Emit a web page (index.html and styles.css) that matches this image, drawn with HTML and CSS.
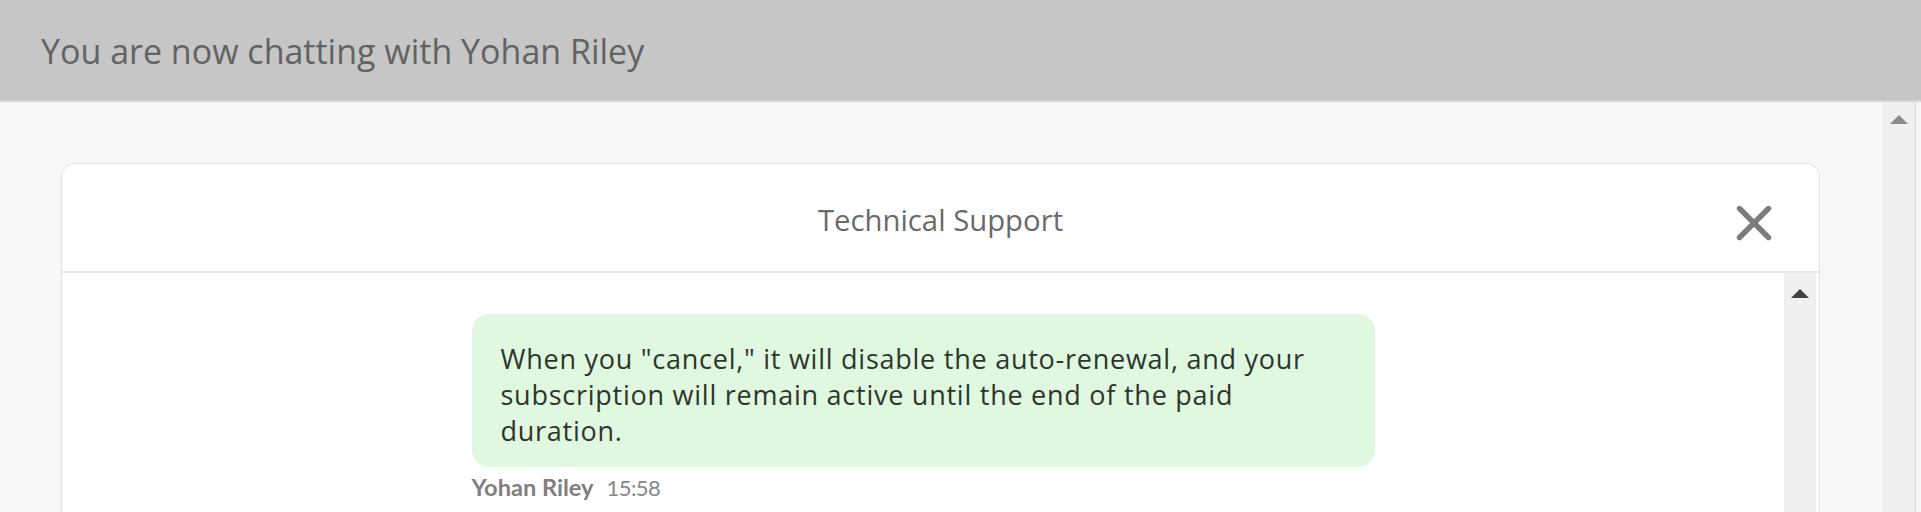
FILE: index.html
```html
<!DOCTYPE html>
<html lang="en">
<head>
<meta charset="utf-8">
<title>Chat</title>
<link rel="stylesheet" href="styles.css">
</head>
<body>
<header class="topbar">You are now chatting with Yohan Riley</header>
<div class="main">
  <div class="content">
    <section class="card">
      <div class="card-head">
        <span class="card-title">Technical Support</span>
        <button class="close" aria-label="Close">
          <svg viewBox="0 0 36 36" width="36" height="36"><path d="M3.5 3.5 L32.5 32.5 M32.5 3.5 L3.5 32.5" stroke="#7c7c7c" stroke-width="5.4" stroke-linecap="round"/></svg>
        </button>
      </div>
      <div class="card-body">
        <div class="messages">
          <div class="msg">
            <div class="bubble">When you "cancel," it will disable the auto-renewal, and your<br>subscription will remain active until the end of the paid<br>duration.</div>
            <div class="meta"><span class="author">Yohan Riley</span><span class="time">15:58</span></div>
          </div>
        </div>
        <div class="inner-scroll"><span class="arrow dark"></span></div>
      </div>
    </section>
  </div>
  <div class="outer-scroll"><span class="arrow light"></span></div>
</div>
</body>
</html>
```

FILE: styles.css
```css
html, body { margin: 0; padding: 0; }
body {
  font-family: "Open Sans", "Noto Sans", sans-serif;
  background: #f7f7f7;
  height: 512px;
  overflow: hidden;
}
.topbar {
  box-sizing: border-box;
  height: 102px;
  background: #c6c6c6;
  border-bottom: 2px solid #d6d6d6;
  color: #636363;
  font-size: 34px;
  display: flex;
  align-items: center;
  padding: 2px 0 0 41px;
}
.main {
  display: flex;
  height: 410px;
}
.content {
  flex: 1;
  padding: 61px 62px 0 61px;
  overflow: hidden;
}
.card {
  background: #fff;
  border: 1px solid #e4e4e4;
  border-bottom: none;
  border-radius: 14px 14px 0 0;
  height: 100%;
  display: flex;
  flex-direction: column;
}
.card-head {
  box-sizing: border-box;
  height: 109px;
  padding-top: 5px;
  border-bottom: 2px solid #e6e6e6;
  display: flex;
  align-items: center;
  justify-content: center;
  position: relative;
}
.card-title {
  font-size: 29.3px;
  color: #6a6a6a;
}
.close {
  position: absolute;
  right: 47px;
  top: 41px;
  background: none;
  border: 0;
  padding: 0;
  width: 36px;
  height: 36px;
}
.close svg { display: block; }
.card-body {
  flex: 1;
  display: flex;
}
.messages {
  flex: 1;
  padding-top: 41px;
}
.msg {
  width: 903px;
  margin: 0 auto;
}
.bubble {
  background: #e0f8df;
  border-radius: 17px;
  padding: 27px 20px 18px 29px;
  font-size: 27px;
  letter-spacing: 0.75px;
  line-height: 36px;
  color: #2c362c;
}
.meta {
  margin-top: 8px;
  line-height: 24px;
  color: #808080;
  display: flex;
  align-items: baseline;
  gap: 13px;
  font-family: Lato, "Open Sans", sans-serif;
}
.author {
  font-weight: 700;
  font-size: 23.6px;
}
.time {
  font-size: 22px;
  letter-spacing: -0.6px;
  color: #888;
}
.inner-scroll {
  width: 32px;
  margin-right: 3px;
  background: #f0f0f0;
  display: flex;
  justify-content: center;
  padding-top: 16px;
}
.outer-scroll {
  width: 33px;
  margin-right: 5px;
  background: #f0f0f0;
  border-right: 1px solid #dcdcdc;
  display: flex;
  justify-content: center;
  padding-top: 13px;
}
.arrow {
  width: 0;
  height: 0;
  border-left: 9px solid transparent;
  border-right: 9px solid transparent;
  border-bottom: 9px solid #444;
}
.arrow.light { border-bottom-color: #8c8c8c; }
.arrow.dark { border-bottom-color: #3e3e3e; }
```
